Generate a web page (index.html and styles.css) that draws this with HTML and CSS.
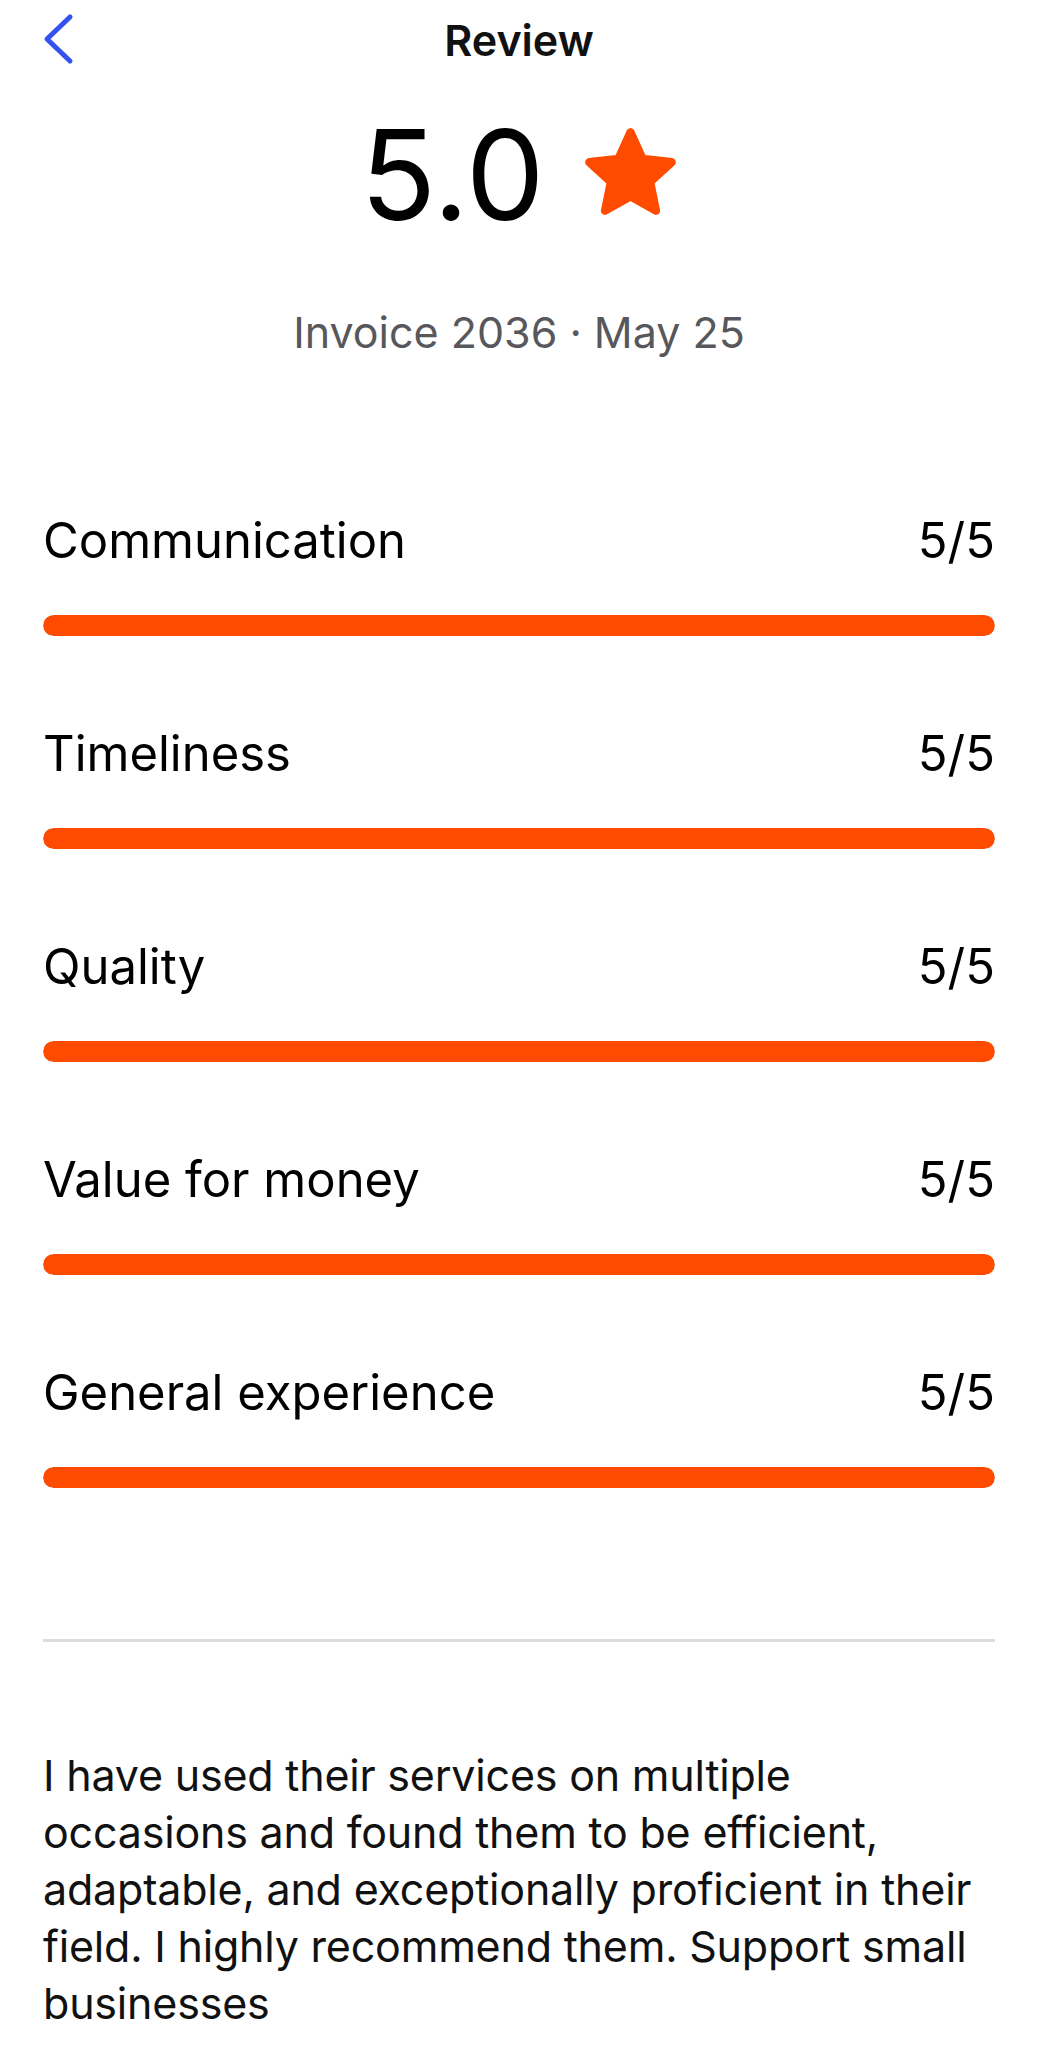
FILE: index.html
```html
<html lang="en">

<head>
  <meta charset="UTF-8">
  <meta name="viewport" content="width=device-width, initial-scale=1.0">
  <title>Review</title>
  <link rel="stylesheet" href="styles.css">
</head>

<body>
  <div class="page">
    <header class="topbar">
      <a class="back" href="#">
        <svg width="32" height="52" viewBox="0 0 32 52">
          <path d="M27 4 L4 26 L27 48" fill="none" stroke="#3352f0" stroke-width="5" stroke-linecap="round" stroke-linejoin="round" />
        </svg>
      </a>
      <h1 class="title">Review</h1>
      <span></span>
    </header>

    <div class="score">
      <span class="score-value">5.0</span>
      <svg class="star" width="95" height="91" viewBox="4 4 92 88">
        <polygon points="50,10 61.76,35.82 89.95,39.02 69.02,58.18 74.69,85.98 50,72 25.31,85.98 30.98,58.18 10.05,39.02 38.24,35.82"
          fill="#ff4b00" stroke="#ff4b00" stroke-width="8" stroke-linejoin="round" />
      </svg>
    </div>

    <p class="meta">Invoice 2036 · May 25</p>

    <div class="ratings">
      <div class="rating">
        <div class="rating-head"><span>Communication</span><span>5/5</span></div>
        <div class="bar"><div class="bar-fill" style="width: 100%"></div></div>
      </div>
      <div class="rating">
        <div class="rating-head"><span>Timeliness</span><span>5/5</span></div>
        <div class="bar"><div class="bar-fill" style="width: 100%"></div></div>
      </div>
      <div class="rating">
        <div class="rating-head"><span>Quality</span><span>5/5</span></div>
        <div class="bar"><div class="bar-fill" style="width: 100%"></div></div>
      </div>
      <div class="rating">
        <div class="rating-head"><span>Value for money</span><span>5/5</span></div>
        <div class="bar"><div class="bar-fill" style="width: 100%"></div></div>
      </div>
      <div class="rating">
        <div class="rating-head"><span>General experience</span><span>5/5</span></div>
        <div class="bar"><div class="bar-fill" style="width: 100%"></div></div>
      </div>
    </div>

    <hr class="divider">

    <p class="comment">I have used their services on multiple<br>occasions and found them to be efficient,<br>adaptable, and exceptionally proficient in their<br>field. I highly recommend them. Support small<br>businesses</p>
  </div>
</body>

</html>
```

FILE: styles.css
```css
body {
  margin: 0;
  padding: 0;
  background-color: #ffffff;
  font-family: Inter, "Liberation Sans", Arial, sans-serif;
  color: #000;
}

.page {
  padding: 0 43px;
}

.topbar {
  display: grid;
  grid-template-columns: 1fr auto 1fr;
  align-items: center;
  height: 80px;
}

.back {
  display: flex;
  align-items: center;
  margin-top: -3px;
}

.title {
  margin: 0;
  font-size: 43px;
  line-height: 1;
  font-weight: 600;
  color: #111;
}

.score {
  display: flex;
  justify-content: center;
  align-items: center;
  gap: 38px;
  margin-top: 32px;
}

.score-value {
  font-size: 125px;
  line-height: 1;
  font-weight: 400;
}

.star {
  margin-bottom: 6px;
}

.meta {
  margin: 74px 0 0;
  text-align: center;
  font-size: 43px;
  line-height: 1;
  color: #58585c;
}

.ratings {
  display: flex;
  flex-direction: column;
  gap: 93px;
  margin-top: 162px;
}

.rating-head {
  display: flex;
  justify-content: space-between;
  font-size: 49px;
  line-height: 1;
}

.bar {
  height: 21px;
  margin-top: 50px;
  border-radius: 11px;
  background-color: #eeeeee;
  overflow: hidden;
}

.bar-fill {
  height: 100%;
  border-radius: 11px;
  background-color: #ff4b00;
}

.divider {
  margin: 151px 0 0;
  border: none;
  border-top: 3px solid #dcdcdc;
}

.comment {
  margin: 105px 0 0;
  font-size: 43px;
  line-height: 57px;
  letter-spacing: -0.2px;
  color: #111;
}
```
